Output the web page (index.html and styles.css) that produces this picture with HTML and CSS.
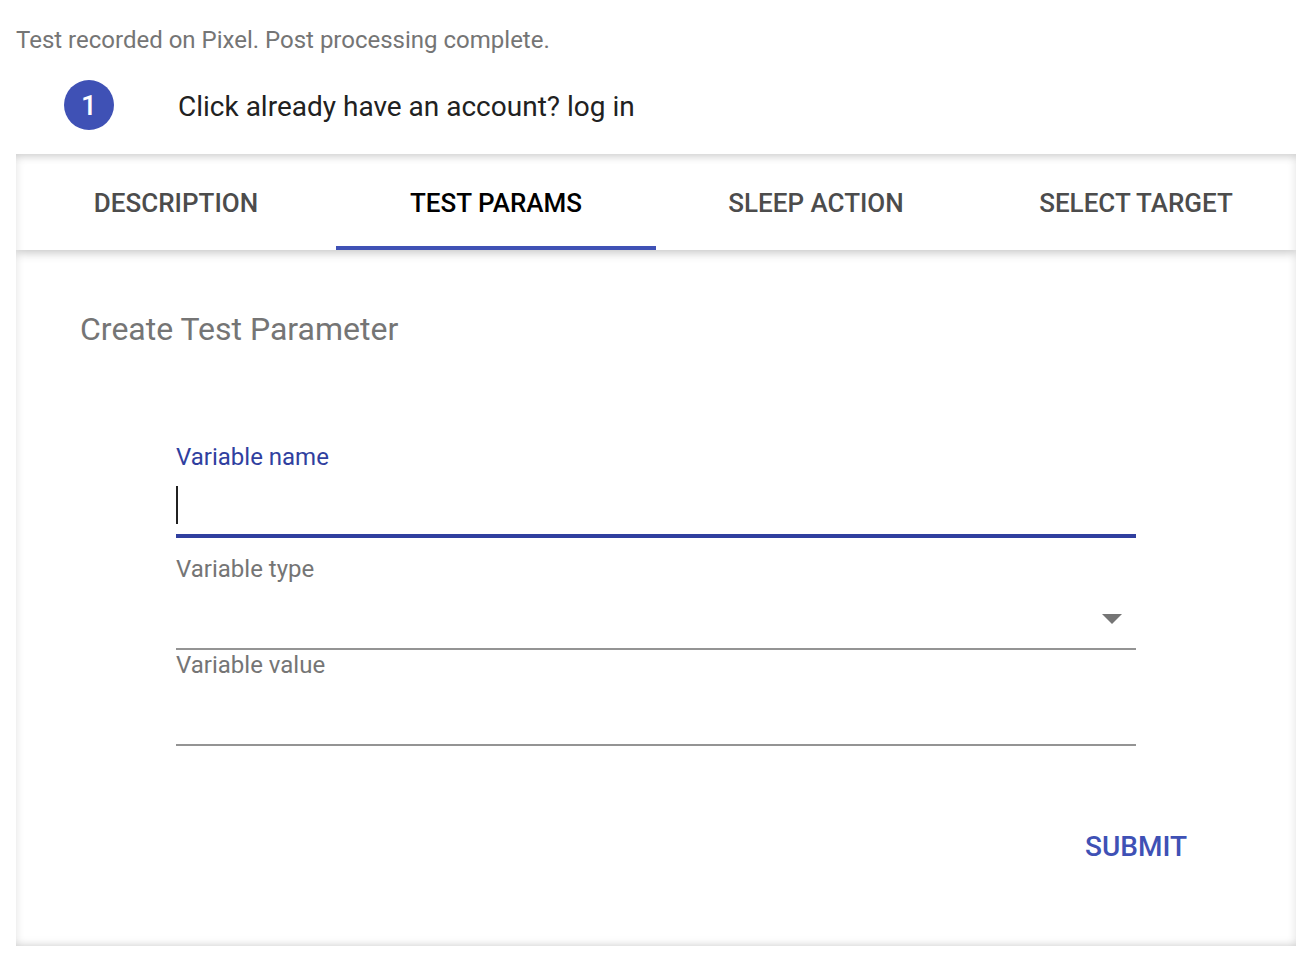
FILE: index.html
```html
<!DOCTYPE html>
<html lang="en">
<head>
<meta charset="utf-8">
<title>Create Test Parameter</title>
<meta name="viewport" content="width=device-width, initial-scale=1">
<link rel="stylesheet" href="styles.css">
</head>
<body>
<main class="page">
  <p class="status">Test recorded on Pixel. Post processing complete.</p>
  <div class="step">
    <span class="step-number">1</span>
    <span class="step-text">Click already have an account? log in</span>
  </div>
  <section class="panel">
    <div class="tabs" role="tablist">
      <button class="tab" type="button" role="tab" aria-selected="false">DESCRIPTION</button>
      <button class="tab tab-active" type="button" role="tab" aria-selected="true">TEST PARAMS</button>
      <button class="tab" type="button" role="tab" aria-selected="false">SLEEP ACTION</button>
      <button class="tab" type="button" role="tab" aria-selected="false">SELECT TARGET</button>
    </div>
    <form class="form">
      <h1 class="title">Create Test Parameter</h1>
      <div class="fields">
        <div class="field field-focused">
          <label class="label" for="variable-name">Variable name</label>
          <div class="control">
            <input class="input" id="variable-name" type="text">
            <span class="caret"></span>
          </div>
        </div>
        <div class="field">
          <label class="label" for="variable-type">Variable type</label>
          <div class="control">
            <select class="input" id="variable-type"><option value=""></option></select>
            <svg class="arrow" viewBox="0 0 20 10" aria-hidden="true"><path d="M0 0h20L10 10z"/></svg>
          </div>
        </div>
        <div class="field">
          <label class="label" for="variable-value">Variable value</label>
          <div class="control">
            <input class="input" id="variable-value" type="text">
          </div>
        </div>
      </div>
      <div class="actions">
        <button class="submit" type="button">SUBMIT</button>
      </div>
    </form>
  </section>
</main>
</body>
</html>
```

FILE: styles.css
```css
* {
  box-sizing: border-box;
}

body {
  margin: 0;
  background: #fff;
  color: #212121;
  font-family: Roboto, "Liberation Sans", sans-serif;
}

.page {
  padding: 24px 20px 18px 16px;
}

.status {
  margin: 0;
  color: #757575;
  font-size: 24px;
  line-height: 32px;
}

.step {
  display: flex;
  align-items: center;
  gap: 64px;
  padding: 24px 48px;
}

.step-number {
  display: flex;
  align-items: center;
  justify-content: center;
  width: 50px;
  height: 50px;
  border-radius: 50%;
  background: #3f51b5;
  color: #fff;
  font-size: 28px;
  font-weight: 500;
}

.step-text {
  padding-top: 4px;
  font-size: 28px;
  line-height: 32px;
}

.panel {
  box-shadow:
    inset 0 2px 10px rgba(0, 0, 0, 0.12),
    inset 0 10px 8px -8px rgba(0, 0, 0, 0.1),
    inset 0 -10px 8px -8px rgba(0, 0, 0, 0.1);
}

.tabs {
  display: grid;
  grid-template-columns: repeat(4, 1fr);
  box-shadow: 0 2px 10px rgba(0, 0, 0, 0.26);
  clip-path: inset(0 0 -16px 0);
}

.tab {
  height: 96px;
  padding: 6px 0 0;
  border: 0;
  border-bottom: 4px solid transparent;
  background: none;
  color: #4c4c4c;
  font: 500 26px/32px Roboto, "Liberation Sans", sans-serif;
}

.tab-active {
  border-bottom-color: #3f51b5;
  color: #000;
}

.form {
  padding: 56px 64px 64px;
}

.title {
  margin: 0;
  color: #757575;
  font-size: 32px;
  font-weight: 400;
  line-height: 46px;
}

.fields {
  padding: 86px 96px 0;
}

.field {
  height: 96px;
  border-bottom: 2px solid #949494;
  color: #757575;
}

.field-focused {
  height: 100px;
  margin-bottom: 16px;
  border-bottom: 4px solid #303f9f;
  color: #303f9f;
}

.label {
  display: block;
  font-size: 24px;
  line-height: 30px;
}

.field-focused .label {
  line-height: 38px;
}

.control {
  position: relative;
}

.input {
  display: block;
  width: 100%;
  height: 58px;
  padding: 0;
  border: 0;
  outline: 0;
  appearance: none;
  background: transparent;
  color: #212121;
  font: 400 32px/40px Roboto, "Liberation Sans", sans-serif;
}

.caret {
  position: absolute;
  top: 10px;
  left: 0;
  width: 2px;
  height: 38px;
  background: #212121;
}

.arrow {
  position: absolute;
  top: 30px;
  right: 14px;
  width: 20px;
  height: 10px;
  fill: #757575;
  pointer-events: none;
}

.actions {
  display: flex;
  justify-content: flex-end;
  padding: 64px 32px 0 0;
}

.submit {
  height: 72px;
  padding: 2px 13px 0;
  border: 0;
  background: none;
  color: #3f51b5;
  font: 500 28px/36px Roboto, "Liberation Sans", sans-serif;
}
```
